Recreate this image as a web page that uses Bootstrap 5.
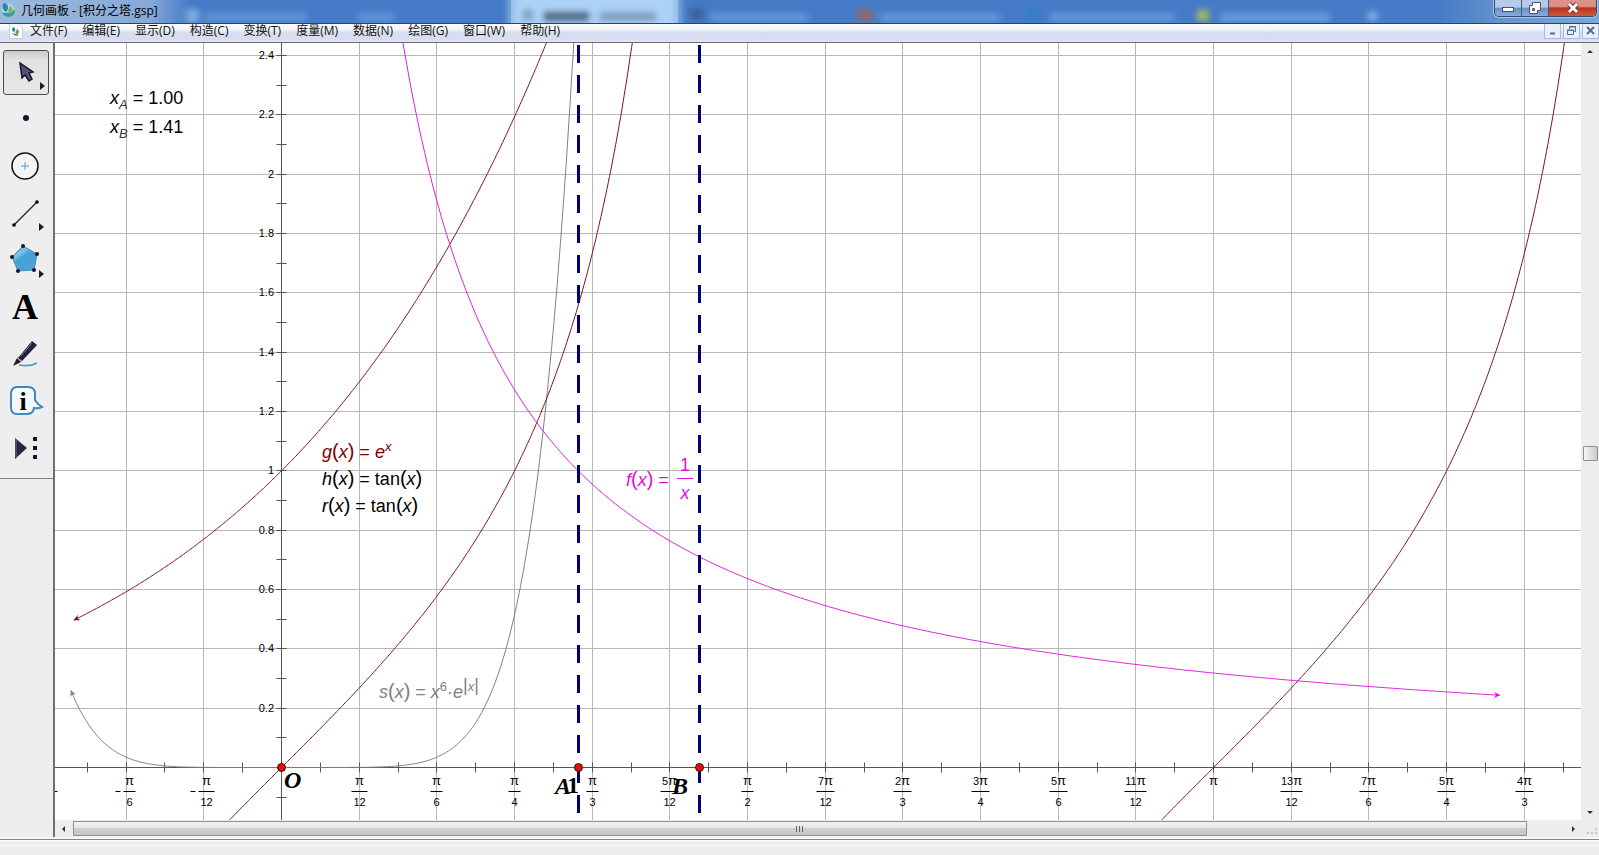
<!DOCTYPE html>
<html lang="zh-CN">
<head>
<meta charset="utf-8">
<meta name="viewport" content="width=device-width, initial-scale=1">
<title>几何画板 - [积分之塔.gsp]</title>
<link href="https://cdn.jsdelivr.net/npm/bootstrap@5.3.0/dist/css/bootstrap.min.css" rel="stylesheet">
<style>
  body { font: 12px/16px "Open Sans", "Noto Sans CJK SC", sans-serif; color: #000; background: #f0eeee; }
  button { border: 0; padding: 0; background: none; color: inherit; }
  .titlebar { height: 24px; background: #457bc6; border-bottom: 1px solid #24446c; }
  .titlebar::before { content: ""; position: absolute; inset: 0; background: linear-gradient(90deg, #9db9dd 0, #86a9d8 150px, #457bc6 190px, #457bc6 calc(100% - 160px), #6796d0 calc(100% - 90px), #7ba6da 100%); }
  .glass { position: absolute; left: 0; top: 0; width: 100%; height: 23px; }
  .caption-text { padding-left: 21px; line-height: 21px; }
  .app-mark { position: absolute; left: 1px; top: 2px; }
  .winbtns { height: 17px; margin-right: 2px; border: 1px solid #33496f; border-top: 0; border-radius: 0 0 5px 5px; overflow: hidden; box-shadow: 0 0 0 1px #a9c6ea; }
  .winbtns button { width: 27px; height: 16px; border-right: 1px solid #40587f; background: linear-gradient(#b5cbe8 0 45%, #6a8fc4 50%, #86addd); display: flex; justify-content: center; align-items: center; }
  .winbtns .w-close { width: 47px; border: 0; background: linear-gradient(#dc9284 0 40%, #b93420 50%, #d0583c); }
  .menubar { height: 18px; padding-bottom: 5px; background: linear-gradient(#fdfdfe 0, #eef1f8 35%, #d9dff0 45%, #d7ddef 85%, #e4e8f4); }
  .menubar a { color: #111; text-decoration: none; line-height: 13px; margin-right: 15px; white-space: nowrap; }
  .doc-mark { margin: 0 7px 0 9px; }
  .mdi { gap: 2px; }
  .mdi button { width: 17px; height: 17px; border: 1px solid #a5bcdc; background: #e6effa; display: flex; align-items: center; justify-content: center; }
  .workarea { border-top: 1px solid #6a6c70; min-height: 0; }
  .toolbox { width: 55px; background: #eee; border-right: 2px solid #707070; padding: 7px 0 0 3px; gap: 2px; }
  .toolbox button { width: 46px; height: 45px; flex: none; }
  .toolbox button.on { border: 1px solid #4c4c4c; border-radius: 3px; background: linear-gradient(#c9c9c9, #e2e2e2 20%, #e6e6e6); }
  .toolbox svg { display: block; width: 44px; height: 43px; margin: 0; }
  .toolbox hr { margin: 5px 0 0 -3px; border-top: 1px solid #808080; opacity: 1; }
  .sheet { background: #fff; min-height: 0; overflow: hidden; }
  .sheet > svg { position: absolute; left: 0; top: 0; width: 100%; height: 100%; }
  .vbar { width: 18px; background: #eeeded; padding: 5px 0; }
  .vthumb { width: 15px; height: 15px; border: 1px solid #8d8d8d; border-radius: 1px; background: linear-gradient(90deg, #f6f6f6, #cccccc); flex: none; }
  .before-thumb { flex: 53 0 0; }
  .after-thumb { flex: 47 0 0; }
  .hbar { height: 17px; background: #eeeded; }
  .hbar .arrowcell { width: 18px; }
  .hthumb { height: 15px; margin-top: 1px; border: 1px solid #909090; background: linear-gradient(#f2f2f2, #e6e6e6 45%, #cfcfcf 50%, #c4c4c4); }
  .gripcell { width: 72px; padding-left: 44px; }
  .status { height: 16px; border-top: 1px solid #858585; background: linear-gradient(#fdfdfd, #e8e8e8 3px, #f8f8f8 5px, #f0eded 6px); }
  .gap-line { height: 2px; background: #f6f6f6; }
  .axis-text { font: 11px "Liberation Sans", sans-serif; }
  .axis-text .pi { font-size: 13px; }
  .formula { font: 18px "Liberation Sans", sans-serif; }
  .formula .it, .formula .sb, .formula .sp { font-style: italic; }
  .formula .br { font-size: 20px; }
  .formula .sb, .formula .sp { font-size: 13px; }
  .formula .sb { fill: #333; }
  .pt { font: italic bold 24px "Liberation Serif", serif; }
  .pt-up { font: bold 24px "Liberation Serif", serif; }
  .letter { font: bold 36px "Liberation Serif", serif; }
</style>
</head>
<body class="vh-100 d-flex flex-column overflow-hidden">
<header class="titlebar position-relative d-flex justify-content-between flex-shrink-0 overflow-hidden">
  <svg class="glass" aria-hidden="true">
    <defs><filter id="soft" x="-20%" y="-60%" width="140%" height="220%"><feGaussianBlur stdDeviation="3"/></filter></defs>
    <rect x="511" y="-6" width="167" height="36" fill="#add2f7"/>
    <g filter="url(#soft)">
      <rect x="508" y="-6" width="6" height="36" fill="#8db6e6"/><rect x="675" y="-6" width="6" height="36" fill="#8db6e6"/>
      <rect x="186" y="9" width="13" height="14" fill="#7fabe2"/><rect x="205" y="13" width="102" height="9" fill="#5f94d8"/><rect x="358" y="13" width="36" height="9" fill="#5f94d8"/>
      <rect x="523" y="10" width="10" height="10" fill="#7c9cbf"/><rect x="544" y="12" width="45" height="9" fill="#4c6683"/><rect x="600" y="12" width="56" height="9" fill="#7d9dbf"/>
      <rect x="690" y="8" width="14" height="12" fill="#3c6299"/><rect x="710" y="13" width="98" height="9" fill="#6296da"/>
      <rect x="858" y="10" width="14" height="11" fill="#a0655f"/><rect x="880" y="13" width="120" height="9" fill="#6296da"/>
      <rect x="1028" y="10" width="12" height="11" fill="#2f7fc9"/><rect x="1050" y="13" width="125" height="9" fill="#6296da"/>
      <rect x="1197" y="10" width="12" height="11" fill="#a9b963"/><rect x="1220" y="13" width="110" height="9" fill="#699cde"/><rect x="1368" y="12" width="9" height="8" fill="#8fbcf0"/>
    </g>
  </svg>
  <svg class="app-mark" width="15" height="16" viewBox="0 0 15 16" aria-hidden="true"><circle cx="7" cy="8" r="6.500" fill="#a9d8ea"/><path d="M3 1C8 2 8 7 5 10C2 8 0 5 3 1" fill="#2b86b4"/><path d="M1 10Q5 12 9 10Q13 9 14 7Q14 15 7 15Q2 14 1 10" fill="#3c95ae"/><path d="M9 4Q14 7 10 12Q5 10 9 4" fill="#86b84a"/></svg>
  <div class="caption-text position-relative">几何画板 - [积分之塔.gsp]</div>
  <div class="winbtns position-relative d-flex">
    <button aria-label="最小化"><svg width="14" height="12"><rect x="1.500" y="5.500" width="11" height="4" fill="#fff" stroke="#48566d"/></svg></button>
    <button aria-label="还原"><svg width="14" height="14"><path d="M4.500 1.500H12.500V9.500H9.500V12.500H1.500V4.500H4.500Z" fill="#fff" stroke="#48566d"/><path d="M4.500 7.500H6.500V9.500H4.500Z" fill="#7795bd" stroke="#48566d"/></svg></button>
    <button class="w-close" aria-label="关闭"><svg width="14" height="12"><path d="M3 2L11 10M11 2L3 10" stroke="#6a302b" stroke-width="5"/><path d="M3 2L11 10M11 2L3 10" stroke="#fff" stroke-width="3"/></svg></button>
  </div>
</header>

<nav class="menubar d-flex align-items-center flex-shrink-0">
  <svg class="doc-mark" width="14" height="16" viewBox="0 0 14 16" aria-hidden="true"><path d="M.5 .5H10L13.500 4V15.500H.5Z" fill="#f8fbff" stroke="#c6cfdc"/><path d="M4 4Q8 6 5 9Q2 8 4 4M3 10Q6 14 10 12" fill="#2879a2"/><path d="M8 6Q12 8 8 12Q5 10 8 6" fill="#66a73f"/></svg>
  <a href="#">文件(F)</a><a href="#">编辑(E)</a><a href="#">显示(D)</a><a href="#">构造(C)</a><a href="#">变换(T)</a><a href="#">度量(M)</a><a href="#">数据(N)</a><a href="#">绘图(G)</a><a href="#">窗口(W)</a><a href="#">帮助(H)</a>
  <div class="mdi d-flex ms-auto">
    <button aria-label="最小化文档"><svg width="11" height="11"><path d="M3 8.500H8" stroke="#5b6c86" stroke-width="2"/></svg></button>
    <button aria-label="还原文档"><svg width="11" height="11" fill="none" stroke="#5b6c86"><path d="M3.500 4V1.500H9.500V6.500H8M3 2H10M1.500 5.500H7.500V9.500H1.500ZM1 5H8"/></svg></button>
    <button aria-label="关闭文档"><svg width="11" height="11"><path d="M2 2L9 9M9 2L2 9" stroke="#5b6c86" stroke-width="2"/></svg></button>
  </div>
</nav>

<main class="workarea d-flex flex-grow-1">
  <aside class="toolbox d-flex flex-column flex-shrink-0">
    <button class="on" aria-label="移动箭头工具"><svg viewBox="0 0 44 43"><path d="M16 12L18 27L21 24L25 30L28 28L25 22L29 21Z" fill="#555078" stroke="#17152e" stroke-width="1.500"/><path d="M36 31V39L41 35Z" fill="#1b1a2e"/></svg></button>
    <button aria-label="点工具"><svg viewBox="0 0 44 43"><circle cx="23" cy="20" r="3" fill="#14152a"/></svg></button>
    <button aria-label="圆工具"><svg viewBox="0 0 44 43"><circle cx="22" cy="21" r="13" fill="#f4f4f4" stroke="#151515" stroke-width="1.600"/><path d="M18 21H26M22 17V25" stroke="#5a9fd0"/></svg></button>
    <button aria-label="线段直尺工具"><svg viewBox="0 0 44 43"><path d="M11 33L34 10" stroke="#222" stroke-width="1.300"/><circle cx="11" cy="33" r="1.800"/><circle cx="34" cy="10" r="1.800"/><path d="M36 31V39L41 35Z" fill="#1b1a2e"/></svg></button>
    <button aria-label="多边形工具"><svg viewBox="0 0 44 43"><defs><linearGradient id="pg" x2=".7" y2="1"><stop stop-color="#4b9fd2"/><stop offset=".35" stop-color="#7cc2ea"/><stop offset=".5" stop-color="#459fd4"/><stop offset="1" stop-color="#4ba5da"/></linearGradient></defs><path d="M20 7L34 15L31 31L15 32L9 18Z" fill="url(#pg)" stroke="#478db9"/><g fill="#15162e"><circle cx="20" cy="7" r="2"/><circle cx="34" cy="15" r="2"/><circle cx="31" cy="31" r="2"/><circle cx="15" cy="32" r="2"/><circle cx="9" cy="18" r="2"/></g><path d="M36 31V39L41 35Z" fill="#1b1a2e"/></svg></button>
    <button aria-label="文本工具"><svg viewBox="0 0 44 43"><text x="22" y="33" text-anchor="middle" class="letter">A</text></svg></button>
    <button aria-label="标记工具"><svg viewBox="0 0 44 43"><path d="M15 25L29 8L34 12L19 28Z" fill="#24223a"/><path d="M18 23L29 10" stroke="#77758a"/><path d="M14 25L18 29L10 33Z" fill="#1a1a25"/><path d="M14 24L19 29" stroke="#c2a9a4"/><path d="M16 32Q27 34 34 30" fill="none" stroke="#4f94bc" stroke-width="1.600"/></svg></button>
    <button aria-label="信息工具"><svg viewBox="0 0 44 43"><path d="M13 7H25Q32 7 32 14V20Q34 24 39 27Q35 29 31 28Q30 34 24 34H14Q8 34 8 27V14Q8 8 13 7Z" fill="#f4f8fb" stroke="#4389b9" stroke-width="2"/><text x="20" y="30" text-anchor="middle" font-family="Liberation Serif" font-size="26" font-weight="bold">i</text></svg></button>
    <button aria-label="自定义工具"><svg viewBox="0 0 44 43"><path d="M12 11V32L24 21Z" fill="#29273d"/><path d="M13 12V30" stroke="#777"/><path d="M30 10h4v4h-4zM30 19h4v4h-4zM30 28h4v4h-4z" fill="#15152a"/></svg></button>
    <hr>
  </aside>
  <div class="d-flex flex-column flex-grow-1" style="min-width:0">
    <div class="d-flex flex-grow-1" style="min-height:0">
      <section class="sheet position-relative flex-grow-1" aria-label="绘图区">
        <svg>
          <g id="plot"></g>
          <g class="formula">
            <text x="55" y="61"><tspan class="it">x</tspan><tspan class="sb" dy="5">A</tspan><tspan dy="-5"> = 1.00</tspan></text>
            <text x="55" y="90"><tspan class="it">x</tspan><tspan class="sb" dy="5">B</tspan><tspan dy="-5"> = 1.41</tspan></text>
            <text x="267" y="415" fill="#800000"><tspan class="it">g</tspan><tspan class="br">(</tspan><tspan class="it">x</tspan><tspan class="br">)</tspan> = <tspan class="it">e</tspan><tspan class="sp" dy="-7">x</tspan></text>
            <text x="267" y="442"><tspan class="it">h</tspan><tspan class="br">(</tspan><tspan class="it">x</tspan><tspan class="br">)</tspan> = tan<tspan class="br">(</tspan><tspan class="it">x</tspan><tspan class="br">)</tspan></text>
            <text x="267" y="469"><tspan class="it">r</tspan><tspan class="br">(</tspan><tspan class="it">x</tspan><tspan class="br">)</tspan> = tan<tspan class="br">(</tspan><tspan class="it">x</tspan><tspan class="br">)</tspan></text>
            <g fill="#e010d8"><text x="571" y="443"><tspan class="it">f</tspan><tspan class="br">(</tspan><tspan class="it">x</tspan><tspan class="br">)</tspan> =</text><text x="630" y="428" text-anchor="middle">1</text><path d="M622 435.500H638" stroke="#e010d8"/><text x="630" y="456" text-anchor="middle" class="it">x</text></g>
            <g fill="#808080"><text x="324" y="655"><tspan class="it">s</tspan><tspan class="br">(</tspan><tspan class="it">x</tspan><tspan class="br">)</tspan> = <tspan class="it">x</tspan><tspan font-size="13" dy="-7">6</tspan><tspan dy="7">·</tspan><tspan class="it">e</tspan><tspan font-size="18" dy="-7">|</tspan><tspan class="sp">x</tspan><tspan font-size="18">|</tspan></text></g>
          </g>
          <g class="pt"><text x="229" y="745">O</text><text x="500" y="751">A</text><text x="512" y="750" class="pt-up">1</text><text x="617" y="751">B</text></g>
        </svg>
      </section>
      <div class="vbar d-flex flex-column align-items-center flex-shrink-0">
        <svg width="8" height="6"><path d="M1 5L4 2L7 5Z" fill="#333"/></svg>
        <div class="before-thumb"></div>
        <div class="vthumb"></div>
        <div class="after-thumb"></div>
        <svg width="8" height="6"><path d="M1 2L4 5L7 2Z" fill="#333"/></svg>
      </div>
    </div>
    <div class="hbar d-flex flex-shrink-0">
      <div class="arrowcell d-flex align-items-center justify-content-center"><svg width="6" height="8"><path d="M4 1L1 4L4 7Z" fill="#333"/></svg></div>
      <div class="hthumb flex-grow-1 d-flex align-items-center justify-content-center"><svg width="10" height="8"><path d="M1.500 1V7M4.500 1V7M7.500 1V7" stroke="#666"/></svg></div>
      <div class="gripcell d-flex align-items-center"><svg width="28" height="16"><path d="M1 5L4 8L1 11Z" fill="#333"/><path d="M24 7h2v2h-2zM24 11h2v2h-2zM20 11h2v2h-2zM16 11h2v2h-2z" fill="#c4c4c4"/></svg></div>
    </div>
  </div>
</main>
<div class="gap-line flex-shrink-0"></div>
<footer class="status flex-shrink-0"></footer>

<script src="https://cdn.jsdelivr.net/npm/bootstrap@5.3.0/dist/js/bootstrap.bundle.min.js"></script>
<script>
  // Coordinate system of the sketch: origin and unit length on the sheet
  const OX = 226.5, OY = 724.5, U = 296.7, FAR = 4000;
  const X = v => OX + v * U, Y = v => OY - v * U;
  const snap = v => Math.floor(v) + 0.5;
  let out = '';
  const line = (x1, y1, x2, y2, c, extra = '') => { out += `<line x1="${x1}" y1="${y1}" x2="${x2}" y2="${y2}" stroke="${c}" ${extra}/>`; };
  const label = (x, y, t, a = 'middle') => { out += `<text x="${x}" y="${y}" text-anchor="${a}">${t}</text>`; };

  // Grid
  for (let k = -2; k <= 40; k++) if (k) line(snap(X(k * Math.PI / 12)), 0, snap(X(k * Math.PI / 12)), FAR, '#b8b8b8');
  for (let k = 1; k <= 12; k++) line(0, snap(Y(k * 0.2)), FAR, snap(Y(k * 0.2)), '#b8b8b8');

  // Axes and ticks
  line(0, OY, FAR, OY, '#555'); line(OX, 0, OX, FAR, '#555');
  for (let k = -5; k <= 80; k++) line(snap(X(k * Math.PI / 24)), OY - 5, snap(X(k * Math.PI / 24)), OY + 5, '#555');
  for (let k = -1; k <= 24; k++) line(OX - 5, snap(Y(k / 10)), OX + 5, snap(Y(k / 10)), '#555');

  // Axis labels
  out += '<g class="axis-text">';
  for (let k = 1; k <= 12; k++) label(219, snap(Y(k * 0.2)) + 3.5, String(+(k * 0.2).toFixed(1)), 'end');
  const gcd = (a, b) => b ? gcd(b, a % b) : a;
  for (let k = -3; k <= 16; k++) {
    if (!k) continue;
    const g = gcd(Math.abs(k), 12), n = Math.abs(k) / g, d = 12 / g;
    const x = snap(X(k * Math.PI / 12)) + (k < 0 ? 3 : 0);
    const half = n > 9 ? 11 : n > 1 ? 9 : d > 9 ? 8 : 6;
    if (d > 1) line(x - half, OY + 24, x + half, OY + 24, '#000');
    if (k < 0) line(x - half - 8, OY + 24, x - half - 3, OY + 24, '#000');
    if (x < half) continue;
    label(x, OY + 17.5, (n > 1 ? n : '') + '<tspan class="pi">π</tspan>');
    if (d > 1) label(x, OY + 38.5, d);
  }
  out += '</g>';

  // Function graphs
  const curve = (f, a, b, c) => {
    let d = '';
    for (let i = 0; i <= 400; i++) { const v = a + (b - a) * i / 400; d += (i ? 'L' : 'M') + X(v).toFixed(1) + ' ' + Y(f(v)).toFixed(1); }
    out += `<path d="${d}" fill="none" stroke="${c}"/>`;
  };
  const head = (f, v, s, c) => {
    const q = v + s * 0.01, ang = Math.atan2(Y(f(v)) - Y(f(q)), X(v) - X(q)) * 180 / Math.PI;
    out += `<path d="M0 0L-6 -3L-4 0L-6 3Z" fill="${c}" transform="translate(${X(v)} ${Y(f(v))}) rotate(${ang})"/>`;
  };
  const s = v => v ** 6 * Math.exp(Math.abs(v)), inv = v => 1 / v;
  curve(s, -0.71, 1.1, '#808080'); head(s, -0.71, 1, '#808080');
  curve(Math.exp, -0.7, 1, '#7b1420'); head(Math.exp, -0.7, 1, '#800000');
  curve(Math.tan, -0.4, 1.25, '#7b1420'); curve(Math.tan, Math.PI - 0.4, Math.PI + 1.25, '#7b1420');
  curve(inv, 0.38, 4.107, '#e020e0'); head(inv, 4.107, -1, '#e000e0');

  // Verticals through A and B, and the draggable points
  for (const v of [1, 1.409]) line(snap(X(v)), 2, snap(X(v)), 771, '#000070', 'stroke-width="3" stroke-dasharray="18 12"');
  for (const v of [0, 1, 1.409]) out += `<circle cx="${snap(X(v))}" cy="${OY}" r="4" fill="#e01010" stroke="#4a0808"/>`;
  document.getElementById('plot').innerHTML = out;
</script>
</body>
</html>
